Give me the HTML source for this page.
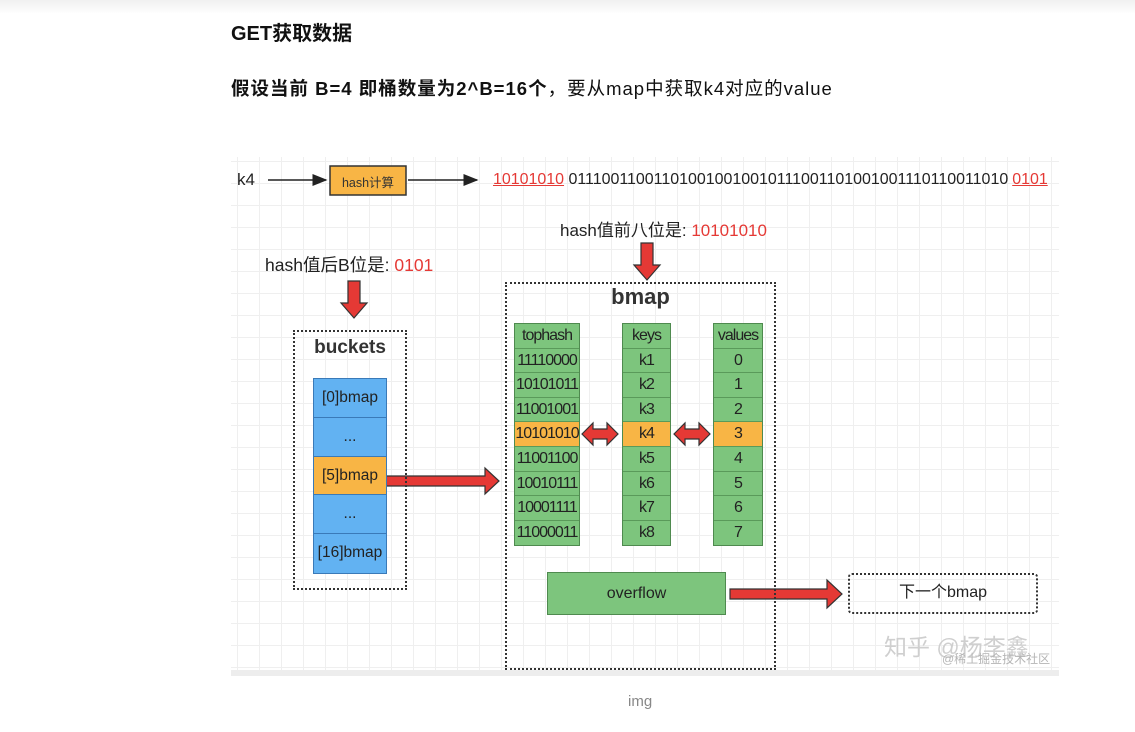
<!DOCTYPE html>
<html><head><meta charset="utf-8"><style>
*{margin:0;padding:0;box-sizing:border-box}
body{width:1135px;height:732px;background:#fff;position:relative;overflow:hidden;font-family:"Liberation Sans","Noto Sans CJK SC",sans-serif;color:#222}
.topbar{position:absolute;left:0;top:0;width:1135px;height:14px;background:linear-gradient(#f0f0f0,#fff)}
.a{position:absolute;white-space:nowrap}
.img{position:absolute;left:231px;top:157px;width:828px;height:519px;background-color:#fff;
background-image:linear-gradient(#efefef 1px,transparent 1px),linear-gradient(90deg,#efefef 1px,transparent 1px);background-size:22px 22px;background-position:6px 4px}
.band{position:absolute;left:231px;top:670px;width:828px;height:6px;background:#ededed}
.dot{position:absolute;border:2.5px dotted #333}
.col{position:absolute;border:1px solid #4f8a4f}
.col div{height:24.6px;line-height:24.6px;text-align:center;font-size:16px;color:#222;background:#7dc57d;border-bottom:1px solid #5a9a5a;letter-spacing:-1px}
.col div.o{background:#f8b545}
.bk{position:absolute;left:313px;top:378px;width:74px;border:1px solid #3a7ab8}
.bk div{height:38.8px;line-height:38.8px;text-align:center;font-size:15.5px;background:#62b2f2;border-bottom:1px solid #3a7ab8;color:#222}
.bk div.o{background:#f8b545}
.r{color:#e53935}
</style></head><body>
<div class="topbar"></div>
<div class="a" style="left:231px;top:17px;font-size:20px;font-weight:bold;color:#111">GET获取数据</div>
<div class="a" style="left:231px;top:75px;font-size:18.5px;letter-spacing:1px;color:#111"><b>假设当前 B=4 即桶数量为2^B=16个</b>，要从map中获取k4对应的value</div>

<div class="img"></div>
<div class="band"></div>
<svg class="a" style="left:0;top:0" width="1135" height="732">
<defs><marker id="m" markerWidth="10" markerHeight="8" refX="9" refY="4" orient="auto"><path d="M0,0 L10,4 L0,8z" fill="#222"/></marker></defs>
<line x1="268" y1="180" x2="326" y2="180" stroke="#222" stroke-width="1.5" marker-end="url(#m)"/>
<line x1="408" y1="180" x2="477" y2="180" stroke="#222" stroke-width="1.5" marker-end="url(#m)"/>
<rect x="330" y="166" width="76" height="29" fill="#f8b545" stroke="#333" stroke-width="1.5"/>
<path d="M641,243 h12 v22 h7 l-13,15 l-13,-15 h7z" fill="#e53935" stroke="#333" stroke-width="1.2"/>
<path d="M348,281 h12 v22 h7 l-13,15 l-13,-15 h7z" fill="#e53935" stroke="#333" stroke-width="1.2"/>
<path d="M386,476 h99 v-8 l14,13 l-14,13 v-8 h-99z" fill="#e53935" stroke="#333" stroke-width="1.2"/>
<path d="M730,589 h97 v-9 l15,14 l-15,14 v-9 h-97z" fill="#e53935" stroke="#333" stroke-width="1.2"/>
<path d="M582,434 l11,-11 v6 h14 v-6 l11,11 l-11,11 v-6 h-14 v6z" fill="#e53935" stroke="#333" stroke-width="1.2"/>
<path d="M674,434 l11,-11 v6 h14 v-6 l11,11 l-11,11 v-6 h-14 v6z" fill="#e53935" stroke="#333" stroke-width="1.2"/>
</svg>
<div class="a" style="left:237px;top:170px;font-size:17px">k4</div>
<div class="a" style="left:330px;top:172px;width:76px;text-align:center;font-size:12.5px;color:#333">hash计算</div>
<div class="a" style="left:493px;top:171px;font-size:16px;letter-spacing:-0.02px"><span class="r" style="text-decoration:underline">10101010</span> 011100110011010010010010111001101001001110110011010<span style="margin-left:4px"></span><span class="r" style="text-decoration:underline">0101</span></div>
<div class="a" style="left:560px;top:216px;font-size:17px">hash值前八位是: <span class="r">10101010</span></div>
<div class="a" style="left:265px;top:252px;font-size:17.5px">hash值后B位是: <span class="r">0101</span></div>

<div class="dot" style="left:293px;top:330px;width:114px;height:260px"></div>
<div class="a" style="left:293px;top:337px;width:114px;text-align:center;font-size:19px;font-weight:bold;color:#333">buckets</div>
<div class="bk"><div>[0]bmap</div><div>...</div><div class="o">[5]bmap</div><div>...</div><div style="border:0">[16]bmap</div></div>

<div class="dot" style="left:505px;top:282px;width:271px;height:388px"></div>
<div class="a" style="left:505px;top:284px;width:271px;text-align:center;font-size:22px;font-weight:bold;color:#333">bmap</div>
<div class="col" style="left:514px;top:323px;width:66px"><div>tophash</div><div>11110000</div><div>10101011</div><div>11001001</div><div class="o">10101010</div><div>11001100</div><div>10010111</div><div>10001111</div><div style="border:0">11000011</div></div>
<div class="col" style="left:622px;top:323px;width:49px"><div>keys</div><div>k1</div><div>k2</div><div>k3</div><div class="o">k4</div><div>k5</div><div>k6</div><div>k7</div><div style="border:0">k8</div></div>
<div class="col" style="left:713px;top:323px;width:50px"><div>values</div><div>0</div><div>1</div><div>2</div><div class="o">3</div><div>4</div><div>5</div><div>6</div><div style="border:0">7</div></div>

<div class="a" style="left:547px;top:572px;width:179px;height:43px;background:#7dc57d;border:1px solid #4f8a4f;line-height:41px;text-align:center;font-size:16px">overflow</div>
<div class="dot" style="left:848px;top:573px;width:190px;height:41px;border-radius:4px;line-height:36px;text-align:center;font-size:16px">下一个bmap</div>

<div class="a" style="left:884px;top:628px;font-size:23px;color:#cfcfcf">知乎 @杨李鑫</div>
<div class="a" style="left:942px;top:650px;font-size:12px;color:#b5b5b5">@稀土掘金技术社区</div>
<div class="a" style="left:628px;top:693px;font-size:15px;color:#888">img</div>
</body></html>
